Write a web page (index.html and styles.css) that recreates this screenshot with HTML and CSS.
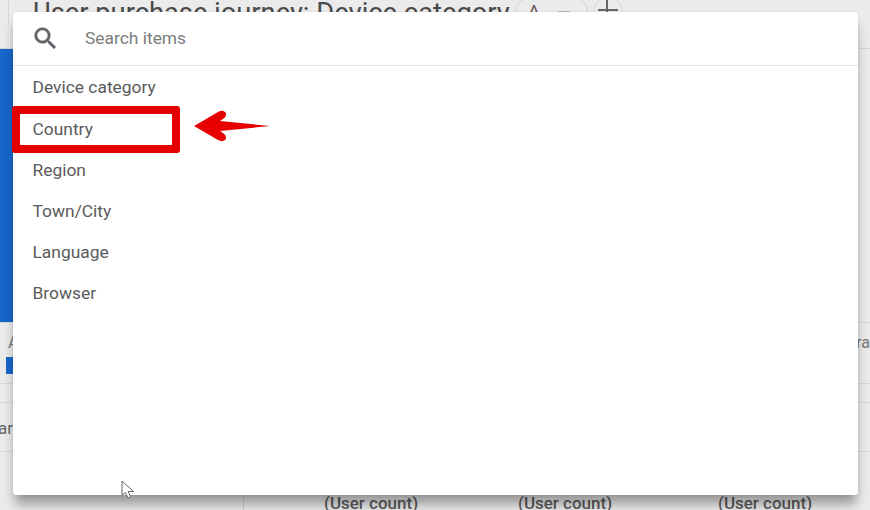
FILE: index.html
```html
<!DOCTYPE html>
<html lang="en">
<head>
    <meta charset="UTF-8">
    <title>User purchase journey: Device category</title>
    <link rel="stylesheet" href="styles.css">
</head>
<body>
    <div class="page">
        <div class="title-bar">
            <div class="title-rail"></div>
            <h1 class="title">User purchase journey: Device category</h1>
            <div class="title-actions">
                <div class="segment">
                    <span class="segment-a">A</span>
                    <span class="segment-minus"></span>
                </div>
                <div class="round-btn"><span class="plus-h"></span><span class="plus-v"></span></div>
            </div>
        </div>

        <div class="chart-row">
            <div class="chart-bar"></div>
        </div>

        <div class="legend">
            <div class="legend-label">A</div>
            <div class="legend-swatch"></div>
            <div class="legend-label legend-right">ra</div>
        </div>

        <div class="table-row table-row-thin"></div>
        <div class="table-row table-row-text">
            <span>ar</span>
        </div>

        <div class="table-head">
            <span>(User count)</span>
            <span>(User count)</span>
            <span>(User count)</span>
        </div>
    </div>

    <div class="picker">
        <div class="picker-search">
            <svg class="search-icon" viewBox="0 0 24 24" width="29" height="29">
                <path d="M15.5 14h-.79l-.28-.27A6.47 6.47 0 0 0 16 9.5 6.5 6.5 0 1 0 9.5 16c1.61 0 3.09-.59 4.23-1.57l.27.28v.79l5 4.99L20.49 19l-4.99-5zm-6 0C7.01 14 5 11.99 5 9.5S7.01 5 9.5 5 14 7.01 14 9.5 11.99 14 9.5 14z"/>
            </svg>
            <span class="search-text">Search items</span>
        </div>
        <ul class="picker-list">
            <li>Device category</li>
            <li>Country</li>
            <li>Region</li>
            <li>Town/City</li>
            <li>Language</li>
            <li>Browser</li>
        </ul>
    </div>

    <div class="highlight-box"></div>
    <svg class="arrow" viewBox="0 0 78 34" width="78" height="34">
        <path d="M1 17 L25 3 Q30 0.5 32.500 3.500 Q34.500 7 30 10 L27 12 L77 17 L27 22 L30 24 Q34.500 27 32.500 30.500 Q30 33.500 25 31 Z"/>
    </svg>
    <svg class="cursor" viewBox="0 0 14 20" width="14" height="20">
        <path d="M1 1 L1 15 L4.5 12.5 L7 18 L9.5 17 L7.2 11.5 L12.5 11.5 Z"/>
    </svg>
</body>
</html>
```

FILE: styles.css
```css
* {
    margin: 0;
    padding: 0;
    box-sizing: border-box;
}

html, body {
    width: 870px;
    height: 510px;
    overflow: hidden;
}

body {
    font-family: Roboto, "Liberation Sans", sans-serif;
    background: #ebebec;
    color: #555;
}

.page {
    height: 510px;
    display: flex;
    flex-direction: column;
}

.title-bar {
    height: 49px;
    flex: none;
    padding-left: 8px;
    display: flex;
    align-items: flex-start;
    border-bottom: 1px solid #d6d6d6;
}

.title-rail {
    width: 1px;
    height: 25px;
    margin-right: 24px;
    background: #d4d4d6;
}

.title {
    font-size: 27.3px;
    font-weight: 400;
    line-height: 32px;
    color: #4a4a4a;
    margin-top: -3px;
    white-space: nowrap;
}

.title-actions {
    display: flex;
    align-items: flex-start;
    gap: 5px;
    margin-left: 5px;
    margin-top: -3px;
}

.segment {
    width: 73px;
    height: 30px;
    border: 1px solid #d4d4d4;
    border-radius: 15px;
    display: flex;
    padding-left: 12px;
}

.segment-a {
    font-size: 19px;
    line-height: 27px;
    color: #6b5a5e;
}

.segment-minus {
    width: 12px;
    height: 2px;
    margin: 13px 0 0 18px;
    background: #b5b5b5;
}

.round-btn {
    width: 30px;
    height: 30px;
    border: 1px solid #d4d4d4;
    border-radius: 50%;
    position: relative;
}

.plus-h {
    position: absolute;
    left: 4px;
    top: 11px;
    width: 20px;
    height: 2px;
    background: #666;
}

.plus-v {
    position: absolute;
    left: 12px;
    top: 2px;
    width: 2px;
    height: 20px;
    background: #666;
}

.chart-row {
    height: 273px;
    flex: none;
}

.chart-bar {
    width: 13px;
    height: 100%;
    background: #1766cc;
}

.legend {
    height: 62px;
    flex: none;
    padding-left: 6px;
    position: relative;
    border-top: 1px solid #d8d8d8;
    border-bottom: 1px solid #d8d8d8;
}

.legend-label {
    font-size: 16px;
    line-height: 18px;
    margin-top: 11px;
    margin-left: 2px;
    color: #777;
}

.legend-swatch {
    width: 8px;
    height: 17px;
    margin-top: 5px;
    background: #1766cc;
}

.legend-right {
    position: absolute;
    right: 0;
    top: 0;
}

.table-row-thin {
    height: 19px;
    flex: none;
    border-bottom: 1px solid #d8d8d8;
}

.table-row-text {
    height: 49px;
    flex: none;
    display: flex;
    align-items: center;
    font-size: 17px;
    color: #666;
    border-bottom: 1px solid #d8d8d8;
    padding-top: 2px;
}

.table-row-text span {
    margin-left: -2px;
}

.table-head {
    flex: none;
    height: 59px;
    display: grid;
    grid-template-columns: 194px 200px 94px;
    align-items: start;
    margin-left: 243px;
    padding: 43px 0 0 80px;
    border-left: 1px solid #d0d0d0;
    font-size: 17px;
    font-weight: 500;
    line-height: 16px;
    color: #5c5c5c;
    white-space: nowrap;
}

.picker {
    position: absolute;
    left: 13px;
    top: 12px;
    width: 845px;
    height: 483px;
    background: #fff;
    border-radius: 3px;
    box-shadow: 0 11px 12px -2px rgba(0, 0, 0, 0.36), 0 0 3px rgba(0, 0, 0, 0.08);
}

.picker-search {
    height: 54px;
    display: flex;
    align-items: center;
    padding-left: 18px;
    padding-bottom: 1px;
    border-bottom: 1px solid #e2e2e2;
}

.search-icon {
    fill: #5f6368;
    stroke: #5f6368;
    stroke-width: 0.4;
}

.search-text {
    margin-left: 25px;
    font-size: 17.4px;
    color: #7c7c7c;
}

.picker-list {
    list-style: none;
    padding-top: 1.4px;
}

.picker-list li {
    height: 41.2px;
    line-height: 41.2px;
    padding-left: 19.5px;
    font-size: 17.4px;
    color: #5a5a5a;
}

.highlight-box {
    position: absolute;
    left: 12px;
    top: 106px;
    width: 168px;
    height: 47px;
    border: 8px solid #e40000;
    border-radius: 3px;
}

.arrow {
    position: absolute;
    left: 193px;
    top: 109px;
    fill: #e60000;
}

.cursor {
    position: absolute;
    left: 121px;
    top: 480px;
    fill: #fff;
    stroke: #666;
    stroke-width: 1;
}
```
